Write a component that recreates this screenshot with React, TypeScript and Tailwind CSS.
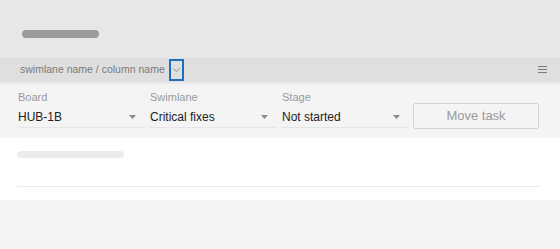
import React from 'react';

const Caret = () => (
  <svg width="7" height="4" viewBox="0 0 7 4" className="shrink-0">
    <path d="M0 0 L7 0 L3.5 4 Z" fill="#8a8a8a" />
  </svg>
);

const SelectField = ({ label, value, width }: { label: string; value: string; width: string }) => (
  <div className={`flex flex-col ${width}`}>
    <div className="text-[11px] leading-[13px] text-[#9a9a9a] pl-[1px]">{label}</div>
    <div className="h-[24px] flex items-center justify-between border-b border-[#e6e6e6] pl-[1px] pr-[9px] pt-[3px]">
      <span className="text-[12px] text-[#222]">{value}</span>
      <Caret />
    </div>
  </div>
);

export default function App() {
  return (
    <div className="w-[560px] h-[249px] bg-[#f3f3f3] flex flex-col font-['Liberation_Sans',Arial,sans-serif]">
      {/* title placeholder */}
      <div className="h-[58px] bg-[#e7e7e7] pt-[30px] pl-[22px]">
        <div className="w-[77px] h-[8px] rounded-full bg-[#9b9b9b]" />
      </div>

      {/* breadcrumb bar */}
      <div className="h-[23px] bg-[#dfdfdf] flex items-center pl-[20px] pr-[13px] shadow-[0_2px_3px_rgba(0,0,0,0.08)] relative z-10">
        <span className="text-[10.5px] text-[#7a7a7a]">swimlane name / column name</span>
        <div className="ml-[4px] w-[15px] h-[22px] border-2 border-[#1f6fbf] flex items-center justify-center">
          <svg width="7" height="4" viewBox="0 0 7 4">
            <path d="M0.5 0.5 L3.5 3.5 L6.5 0.5" fill="none" stroke="#8a8a8a" strokeWidth="1" />
          </svg>
        </div>
        <div className="flex-1" />
        <svg width="9" height="7" viewBox="0 0 9 7">
          <path d="M0 0.5 H9 M0 3.5 H9 M0 6.5 H9" stroke="#7a7a7a" strokeWidth="1" />
        </svg>
      </div>

      {/* move form */}
      <div className="h-[57px] bg-[#f4f4f4] flex items-start gap-[4px] pl-[17px] pt-[10px]">
        <SelectField label="Board" value="HUB-1B" width="w-[128px]" />
        <SelectField label="Swimlane" value="Critical fixes" width="w-[128px]" />
        <SelectField label="Stage" value="Not started" width="w-[128px]" />
        <button className="mt-[12px] w-[126px] h-[26px] border border-[#d4d4d4] rounded-[2px] bg-[#f4f4f4] text-[13px] text-[#9a9a9a]">
          Move task
        </button>
      </div>

      {/* task placeholder */}
      <div className="h-[62px] bg-white pl-[17px] pr-[20px] pt-[13px] flex flex-col">
        <div className="w-[107px] h-[7px] rounded-full bg-[#ececec]" />
        <div className="mt-[28px] h-px bg-[#ebebeb]" />
      </div>
    </div>
  );
}
